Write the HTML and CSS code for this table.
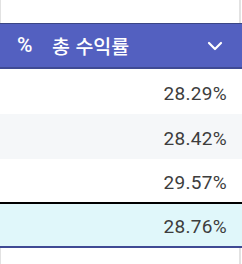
FILE: index.html
```html
<!DOCTYPE html>
<html lang="ko">
<head>
<meta charset="utf-8">
<link rel="stylesheet" href="styles.css">
</head>
<body>
<div class="col">
  <div class="spacer"></div>
  <div class="head">
    <span class="pct">%</span>
    <span class="title">총 수익률</span>
    <svg class="chev" width="16" height="10" viewBox="0 0 16 10"><polyline points="2,2 8,8 14,2" fill="none" stroke="#fff" stroke-width="2.2" stroke-linecap="round" stroke-linejoin="round"/></svg>
  </div>
  <div class="row">28.29%</div>
  <div class="row alt">28.42%</div>
  <div class="row last">29.57%</div>
  <div class="row total">28.76%</div>
  <div class="spacer bottom"></div>
</div>
</body>
</html>
```
FILE: styles.css
```css
html, body { margin: 0; padding: 0; background: #fff; }
body { width: 242px; height: 264px; overflow: hidden; font-family: Roboto, "Noto Sans CJK KR", sans-serif; }
.col { display: flex; flex-direction: column; width: 242px; }
.spacer { height: 23px; margin-right: 1px; border-left: 1px solid #e2e2e2; border-right: 2px solid #e2e2e2; box-sizing: border-box; }
.spacer.bottom { height: 20px; }
.head {
  height: 46px; box-sizing: border-box;
  background: #5360c0;
  border-top: 1px solid #3b4685;
  border-bottom: 2px solid #3f4a94;
  display: flex; align-items: center;
  padding: 0 19px 0 17px;
  color: #fff;
}
.pct { font-family: Roboto, sans-serif; font-weight: 500; font-size: 21px; width: 35px; line-height: 1; }
.title { font-family: "Noto Sans CJK KR", sans-serif; font-weight: 500; font-size: 19.5px; flex: 1; line-height: 1; }
.chev { display: block; }
.row {
  height: 45px; box-sizing: border-box;
  display: flex; align-items: center; justify-content: flex-end;
  padding: 3px 15px 0 0;
  font-size: 19px; letter-spacing: 0.3px; color: #3d3d3d;
}
.row.alt { background: #f5f7f9; }
.row.last { height: 45px; border-bottom: 2px solid #000; }
.row.total { height: 44px; background: #e0f7fa; border-bottom: 2px solid #3f4a94; }
```
